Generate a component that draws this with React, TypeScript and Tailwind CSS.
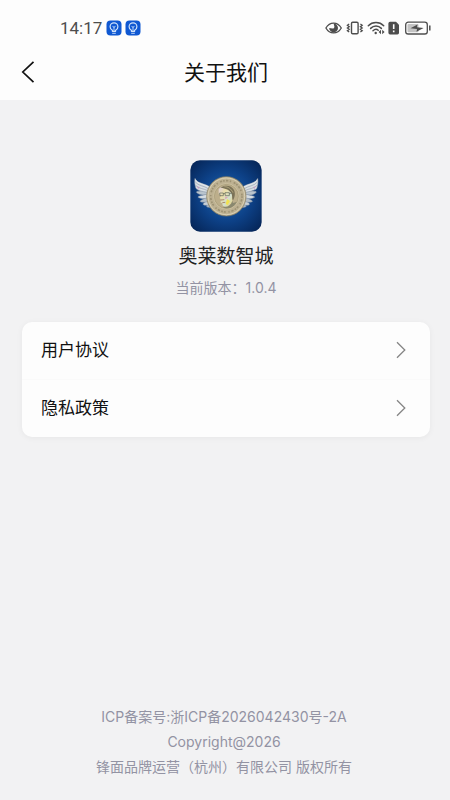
const LINKS = [
  { label: "用户协议", href: "#agreement" },
  { label: "隐私政策", href: "#privacy" },
];

function BulbBadge() {
  return (
    <svg viewBox="0 0 16 16" className="size-4" fill="none" aria-hidden="true">
      <rect x="0.5" y="0.5" width="15" height="15" rx="4" fill="#0f58d2" />
      <path
        d="M6.4 11.3V10.300C4.900 9.600 4.100 8.300 4.100 6.700a3.900 3.900 0 0 1 7.800 0c0 1.600-.8 2.900-2.300 3.600v1z"
        stroke="#cfe2fb"
        strokeWidth="1.2"
        strokeLinejoin="round"
      />
      <path d="M6.600 13.300h2.800M8 11V7.500M6.800 6.200 8 7.500l1.200-1.300" stroke="#cfe2fb" strokeWidth="0.900" strokeLinecap="round" />
    </svg>
  );
}

function StatusIcons() {
  return (
    <svg viewBox="0 0 106 16" className="h-4 w-[106px]" fill="none" stroke="#4d4d4d" aria-hidden="true">
      {/* eye */}
      <path d="M0.900 8C4.700 1.400 12.500 1.400 16.300 8 12.500 14.600 4.700 14.600 0.900 8z" strokeWidth="1.300" />
      <path d="M8.600 3.600a4.400 4.400 0 1 1-4.400 4.400l3.200.6a2 2 0 0 0 2-2.200z" fill="#4d4d4d" stroke="none" />
      {/* vibrate */}
      <rect x="26.500" y="2.200" width="6.600" height="11.600" rx="1.200" strokeWidth="1.400" />
      <path
        d="M24.200 4 22.400 5.300 24.200 6.700 22.400 8 24.200 9.300 22.400 10.700 24.200 12M35.400 4 37.200 5.300 35.400 6.700 37.200 8 35.400 9.300 37.200 10.700 35.400 12"
        strokeWidth="1.300"
      />
      {/* wifi */}
      <path
        d="M43.300 5.800C47.500 1.500 54.500 1.500 58.700 5.800M45.600 8.400C48.700 5.300 53.300 5.300 56.400 8.400M48 10.800C49.700 9.200 52 9.200 53.200 10.300"
        strokeWidth="1.500"
        strokeLinecap="round"
      />
      <circle cx="50.700" cy="13" r="1.200" fill="#4d4d4d" stroke="none" />
      <path d="M56 9.800v4.400L53.600 12zM57.200 9.800v4.400L59.600 12z" fill="#4d4d4d" stroke="none" />
      {/* sim alert */}
      <path
        d="M65 1.800h6l3 3v8a1.600 1.600 0 0 1-1.600 1.600H65a1.600 1.600 0 0 1-1.600-1.600V3.400A1.600 1.600 0 0 1 65 1.800z"
        fill="#4d4d4d"
        stroke="none"
      />
      <path d="M68.700 4.300v4.800M68.700 10.600v1.600" stroke="#ffffff" strokeWidth="1.600" />
      {/* battery */}
      <rect x="80.700" y="2.200" width="21.600" height="11.800" rx="2.600" strokeWidth="1.300" />
      <rect x="82.500" y="4" width="11" height="8.200" rx="1" fill="#c4c4c4" stroke="none" />
      <path d="M85.500 8.200 92.500 4.600 92 7.300 98.600 8 91.500 11.800 92 9z" fill="#4d4d4d" stroke="none" />
      <path d="M104.800 5.600v5" strokeWidth="1.500" />
    </svg>
  );
}

function Wing() {
  return (
    <g stroke="#7d8b9c" strokeWidth="1.500" strokeLinejoin="round">
      <path d="M91 156C80 165 77 169 85 171 92 172 97 170 101 166z" fill="#aab6c2" />
      <path d="M88 146C76 156 68 159 71 163 79 168 91 163 97 157z" fill="#c7d0d8" />
      <path d="M86 137C74 147 60 149 62 154 72 158 87 155 94 147z" fill="#b3bec9" />
      <path d="M85 127C72 137 54 135 55 141 66 148 82 145 90 137z" fill="#d5dce2" />
      <path d="M85 118C70 125 50 119 50 126 60 136 78 136 88 128z" fill="#b9c4ce" />
      <path d="M46 84C51 98 71 99 87 107L100 124 85 126C67 124 49 119 48 112 45 102 44 92 46 84z" fill="#d9dfe4" />
      <path d="M47 95C56 107 73 106 86 115M48 105C58 116 72 114 84 121" fill="none" />
      <path d="M47 87C54 101 73 101 88 110" fill="none" stroke="#f4f6f7" />
      <path d="M51 108l9 2-4 7z" fill="#c98fc0" stroke="none" opacity="0.600" />
    </g>
  );
}

function AppLogo() {
  return (
    <svg viewBox="31 29 216 216" className="size-[72px]" role="img" aria-label="奥莱数智城">
      <defs>
        <radialGradient id="logo-sky" cx="0.500" cy="0.500" r="0.720">
          <stop offset="0" stopColor="#1d66b0" />
          <stop offset="0.500" stopColor="#0d4187" />
          <stop offset="1" stopColor="#04204e" />
        </radialGradient>
        <linearGradient id="logo-face" x1="0" y1="0" x2="1" y2="1">
          <stop offset="0" stopColor="#d9cbe0" />
          <stop offset="0.350" stopColor="#ecdfa8" />
          <stop offset="0.650" stopColor="#d3dfcf" />
          <stop offset="1" stopColor="#ecd070" />
        </linearGradient>
      </defs>
      <rect x="32" y="30" width="214" height="214" rx="29" fill="url(#logo-sky)" />
      <Wing />
      <g transform="matrix(-1 0 0 1 280 0)">
        <Wing />
      </g>
      <circle cx="140" cy="138" r="59" fill="#bdb192" stroke="#8a7f61" strokeWidth="2" />
      <circle cx="140" cy="138" r="55" fill="none" stroke="#ddd5ba" strokeWidth="2.500" />
      <circle cx="140" cy="138" r="47" fill="none" stroke="#6e6347" strokeWidth="5" strokeDasharray="5 4 7 5 4 8 6 3" opacity="0.400" />
      <circle cx="140" cy="138" r="38" fill="#bcae8b" stroke="#d6cba9" strokeWidth="2" />
      <circle cx="140" cy="138" r="36" fill="none" stroke="#968a6b" strokeWidth="1.200" />
      {/* portrait */}
      <path d="M130 172 142 160 156 146 160 158 171 155C164 169 151 175 139 174z" fill="#8a886f" />
      <path
        d="M117 117C124 105 146 105 155 113 162 120 160 139 158 151 154 164 144 170 135 169 128 168 128 162 128 159L122 156 125 148 120 143 124 136 117 130z"
        fill="url(#logo-face)"
      />
      <path d="M123 112C136 102 156 105 163 119 168 130 165 142 160 150 156 147 159 136 155 129 150 119 138 114 123 112z" fill="#7b7257" />
      <path d="M134 109C145 109 154 115 160 127" fill="none" stroke="#c4b98b" strokeWidth="2" />
      <path d="M120 128h11v8h-10zM136 127h13v9h-12zM131 130h5M149 130l8-2" fill="none" stroke="#5c6358" strokeWidth="2" />
      <path d="M124 149l10-1M128 157l9-1" stroke="#a07a5c" strokeWidth="2.500" />
      <path d="M142 146l9 6-7 12-6-3z" fill="#f2e24e" />
      <path d="M137 138l8 4-9 4z" fill="#d8a7b8" />
    </svg>
  );
}

export default function App() {
  return (
    <div className="flex min-h-screen flex-col bg-[#f2f2f3] font-[Inter,'Noto_Sans_CJK_SC',sans-serif]">
      <header className="bg-[#fdfdfd]">
        <div className="flex h-11 items-center justify-between pt-3 pr-[19px] pl-[60px]">
          <div className="flex items-center gap-1">
            <time className="font-[Roboto,sans-serif] text-[17px] leading-5 text-[#4d4d4d]">14:17</time>
            <div className="flex gap-[3px]">
              <BulbBadge />
              <BulbBadge />
            </div>
          </div>
          <StatusIcons />
        </div>
        <div className="grid h-14 grid-cols-[56px_1fr_54px] items-center">
          <button type="button" aria-label="返回" className="flex h-full items-center pl-5">
            <svg viewBox="0 0 16 24" className="h-6 w-4" fill="none" stroke="#111111" strokeWidth="1.700">
              <path d="M13.500 1.800 2.800 12l10.700 10.200" />
            </svg>
          </button>
          <h1 className="pt-0.5 text-center text-[21px] leading-8 text-[#111111]">关于我们</h1>
        </div>
      </header>

      <main className="flex flex-1 flex-col pt-[60px] pr-5 pl-[22px]">
        <div className="flex flex-col items-center">
          <AppLogo />
          <h2 className="mt-[11px] text-[19px] leading-7 text-[#222222]">奥莱数智城</h2>
          <p className="mt-[5px] text-sm leading-6 text-[#9393a3]">当前版本：1.0.4</p>
        </div>

        <nav className="mt-[22px] rounded-[10px] bg-[#fdfdfd] shadow-[0_1px_6px_rgba(0,0,0,0.05)]">
          <ul className="divide-y divide-[#fafafa]">
            {LINKS.map((link) => (
              <li key={link.href}>
                <a href={link.href} className="flex h-[57px] items-center justify-between pr-6 pb-0.5 pl-[19px]">
                  <span className="text-[17px] leading-6 text-[#111111]">{link.label}</span>
                  <svg viewBox="0 0 10 18" className="h-[18px] w-2.5" fill="none" stroke="#858585" strokeWidth="1.300">
                    <path d="M1 1.200 8.800 9 1 16.800" />
                  </svg>
                </a>
              </li>
            ))}
          </ul>
        </nav>

        <footer className="mt-auto pr-1 pb-[21px] text-center text-sm leading-[25px] text-[#9393a3]">
          <p>ICP备案号:浙ICP备2026042430号-2A</p>
          <p>Copyright@2026</p>
          <p>锋面品牌运营（杭州）有限公司 版权所有</p>
        </footer>
      </main>
    </div>
  );
}
